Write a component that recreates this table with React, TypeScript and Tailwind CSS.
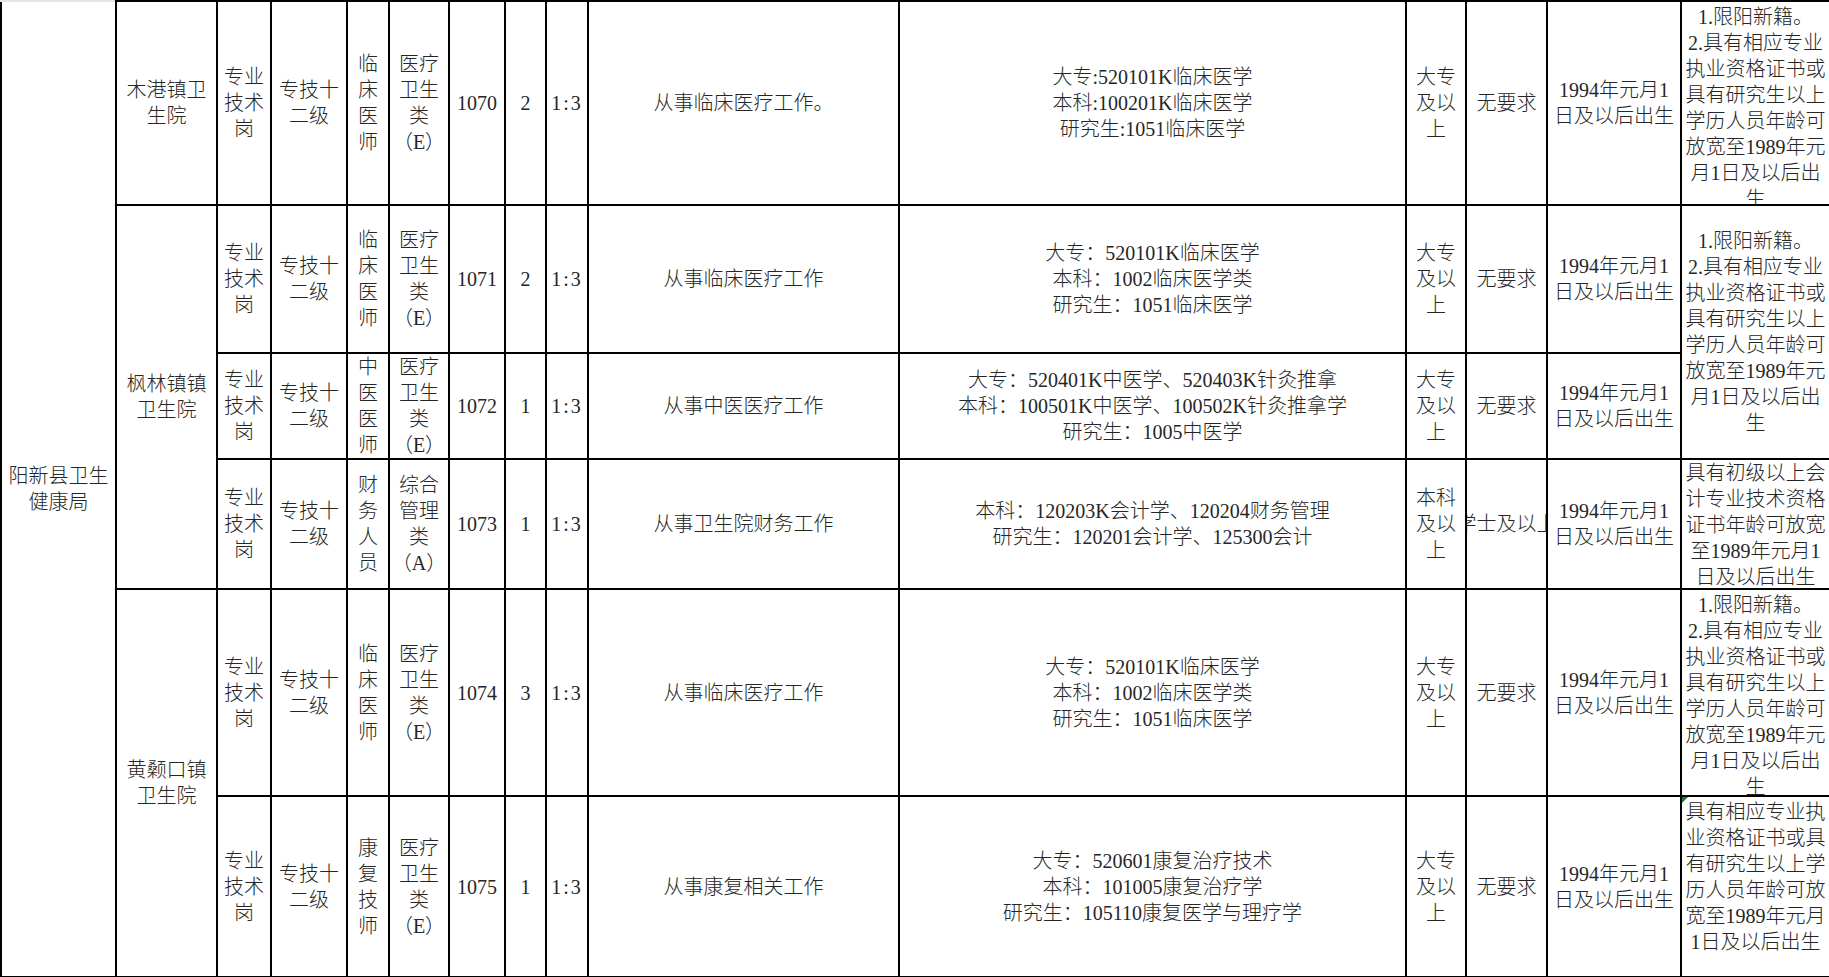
import React from "react"

const font = "font-['Liberation_Serif','Noto_Sans_CJK_SC',serif]"

interface TdProps {
  children?: React.ReactNode
  rowSpan?: number
  className?: string
}

// plain cell: centred both ways, line breaks come from "\n"
function Td({ children, rowSpan, className = "" }: TdProps) {
  return (
    <td
      rowSpan={rowSpan}
      className={`border-2 border-black p-0 text-center align-middle whitespace-pre leading-[26px] ${className}`}
    >
      {children}
    </td>
  )
}

const req1 =
  "1.限阳新籍。\n2.具有相应专业\n执业资格证书或\n具有研究生以上\n学历人员年龄可\n放宽至1989年元\n月1日及以后出\n生"
const req4 = "具有初级以上会\n计专业技术资格\n证书年龄可放宽\n至1989年元月1\n日及以后出生"
const req6 =
  "具有相应专业执\n业资格证书或具\n有研究生以上学\n历人员年龄可放\n宽至1989年元月\n1日及以后出生"

const post = "专业\n技术\n岗"
const grade = "专技十\n二级"
const medE = "医疗\n卫生\n类\n（E）"
const dazhuan = "大专\n及以\n上"
const birth = "1994年元月1\n日及以后出生"
const ratio = <span className="tracking-[2px]">1:3</span>

export default function App() {
  return (
    <div className={`w-[1829px] h-[977px] overflow-hidden bg-white text-[20px] text-[#262626] font-light ${font}`}>
      <table className="table-fixed border-collapse w-[1829px]">
        <colgroup>
          <col className="w-[115px]" />
          <col className="w-[101px]" />
          <col className="w-[54px]" />
          <col className="w-[76px]" />
          <col className="w-[42px]" />
          <col className="w-[60px]" />
          <col className="w-[56px]" />
          <col className="w-[41px]" />
          <col className="w-[42px]" />
          <col className="w-[311px]" />
          <col className="w-[507px]" />
          <col className="w-[60px]" />
          <col className="w-[81px]" />
          <col className="w-[134px]" />
          <col className="w-[149px]" />
        </colgroup>
        <tbody>
          <tr className="h-[204px]">
            <Td rowSpan={6} className="border-t-[#e5e5e5]">
              {"阳新县卫生\n健康局"}
            </Td>
            <Td>{"木港镇卫\n生院"}</Td>
            <Td>{post}</Td>
            <Td>{grade}</Td>
            <Td>{"临\n床\n医\n师"}</Td>
            <Td>{medE}</Td>
            <Td>1070</Td>
            <Td>2</Td>
            <Td>{ratio}</Td>
            <Td>从事临床医疗工作。</Td>
            <Td>{"大专:520101K临床医学\n本科:100201K临床医学\n研究生:1051临床医学"}</Td>
            <Td>{dazhuan}</Td>
            <Td>无要求</Td>
            <Td>{birth}</Td>
            <Td className="align-top">
              <div className="h-[202px] overflow-hidden pt-[2px]">{req1}</div>
            </Td>
          </tr>

          <tr className="h-[148px]">
            <Td rowSpan={3}>{"枫林镇镇\n卫生院"}</Td>
            <Td>{post}</Td>
            <Td>{grade}</Td>
            <Td>{"临\n床\n医\n师"}</Td>
            <Td>{medE}</Td>
            <Td>1071</Td>
            <Td>2</Td>
            <Td>{ratio}</Td>
            <Td>从事临床医疗工作</Td>
            <Td>{"大专：520101K临床医学\n本科：1002临床医学类\n研究生：1051临床医学"}</Td>
            <Td>{dazhuan}</Td>
            <Td>无要求</Td>
            <Td>{birth}</Td>
            <Td rowSpan={2}>{req1}</Td>
          </tr>

          <tr className="h-[101px]">
            <Td>{post}</Td>
            <Td>{grade}</Td>
            <Td className="leading-[25px]">{"中\n医\n医\n师"}</Td>
            <Td className="leading-[25px]">{medE}</Td>
            <Td>1072</Td>
            <Td>1</Td>
            <Td>{ratio}</Td>
            <Td>从事中医医疗工作</Td>
            <Td>
              {"大专：520401K中医学、520403K针灸推拿\n本科：100501K中医学、100502K针灸推拿学\n研究生：1005中医学"}
            </Td>
            <Td>{dazhuan}</Td>
            <Td>无要求</Td>
            <Td>{birth}</Td>
          </tr>

          <tr className="h-[130px]">
            <Td>{post}</Td>
            <Td>{grade}</Td>
            <Td>{"财\n务\n人\n员"}</Td>
            <Td>{"综合\n管理\n类\n（A）"}</Td>
            <Td>1073</Td>
            <Td>1</Td>
            <Td>{ratio}</Td>
            <Td>从事卫生院财务工作</Td>
            <Td>{"本科：120203K会计学、120204财务管理\n研究生：120201会计学、125300会计"}</Td>
            <Td>{"本科\n及以\n上"}</Td>
            <Td>
              <div className="flex justify-center overflow-hidden">
                <span className="whitespace-nowrap">学士及以上</span>
              </div>
            </Td>
            <Td>{birth}</Td>
            <Td>
              <div className="h-[128px] overflow-hidden">{req4}</div>
            </Td>
          </tr>

          <tr className="h-[207px]">
            <Td rowSpan={2}>{"黄颡口镇\n卫生院"}</Td>
            <Td>{post}</Td>
            <Td>{grade}</Td>
            <Td>{"临\n床\n医\n师"}</Td>
            <Td>{medE}</Td>
            <Td>1074</Td>
            <Td>3</Td>
            <Td>{ratio}</Td>
            <Td>从事临床医疗工作</Td>
            <Td>{"大专：520101K临床医学\n本科：1002临床医学类\n研究生：1051临床医学"}</Td>
            <Td>{dazhuan}</Td>
            <Td>无要求</Td>
            <Td>{birth}</Td>
            <Td className="align-top">
              <div className="h-[205px] overflow-hidden pt-[2px]">{req1}</div>
            </Td>
          </tr>

          <tr className="h-[181px]">
            <Td>{post}</Td>
            <Td>{grade}</Td>
            <Td>{"康\n复\n技\n师"}</Td>
            <Td>{medE}</Td>
            <Td>1075</Td>
            <Td>1</Td>
            <Td>{ratio}</Td>
            <Td>从事康复相关工作</Td>
            <Td>{"大专：520601康复治疗技术\n本科：101005康复治疗学\n研究生：105110康复医学与理疗学"}</Td>
            <Td>{dazhuan}</Td>
            <Td>无要求</Td>
            <Td>{birth}</Td>
            <Td className="relative align-top">
              <span className="absolute left-0 top-0 h-0 w-0 border-t-[6px] border-r-[6px] border-t-[#1f7a33] border-r-transparent" />
              <div className="pt-[2px]">{req6}</div>
            </Td>
          </tr>
        </tbody>
      </table>
    </div>
  )
}
